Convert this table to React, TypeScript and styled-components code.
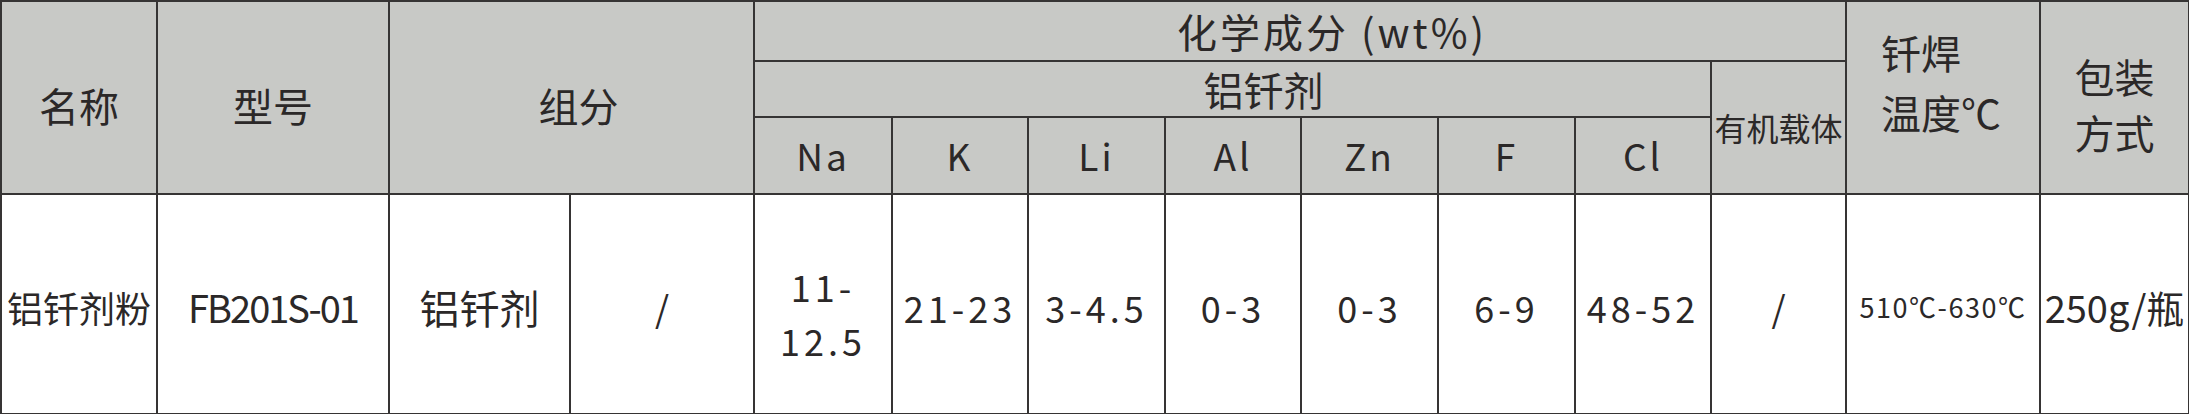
import styled, { createGlobalStyle } from "styled-components";

const GlobalStyle = createGlobalStyle`
  html, body {
    margin: 0;
    padding: 0;
    background: #ffffff;
  }
  body {
    font-family: "Noto Sans CJK SC", "Noto Sans", sans-serif;
    color: #2b2828;
  }
`;

const LINE = "#363434";
const HEAD_BG = "#c8c9c6";

const Table = styled.table`
  width: 2189px;
  height: 414px;
  border-collapse: collapse;
  table-layout: fixed;
  border: 2px solid ${LINE};
`;

const HeadRow = styled.tr<{ $h: number }>`
  height: ${(p) => p.$h}px;
`;

const BodyRow = styled.tr`
  height: 220px;
`;

const Th = styled.th<{ $size?: number; $spacing?: number; $padTop?: number; $padLeft?: number }>`
  background: ${HEAD_BG};
  border: 2px solid ${LINE};
  font-weight: 400;
  font-size: ${(p) => p.$size ?? 40}px;
  letter-spacing: ${(p) => p.$spacing ?? 0}px;
  line-height: 1.2;
  text-align: center;
  vertical-align: middle;
  padding: ${(p) => p.$padTop ?? 0}px 0 0 ${(p) => p.$padLeft ?? 0}px;
  white-space: nowrap;
  color: #2b2828;
`;

const StackHead = styled.th<{ $lh: number; $align: "left" | "center"; $padTop: number; $padLeft: number }>`
  background: ${HEAD_BG};
  border: 2px solid ${LINE};
  font-weight: 400;
  font-size: 40px;
  line-height: ${(p) => p.$lh}px;
  text-align: ${(p) => p.$align};
  vertical-align: ${(p) => (p.$align === "left" ? "top" : "middle")};
  padding: ${(p) => p.$padTop}px 0 0 ${(p) => p.$padLeft}px;
  color: #2b2828;
`;

const Td = styled.td<{ $size?: number; $spacing?: number; $lh?: number; $padTop?: number }>`
  border: 2px solid ${LINE};
  background: #ffffff;
  font-size: ${(p) => p.$size ?? 36}px;
  letter-spacing: ${(p) => p.$spacing ?? 0}px;
  line-height: ${(p) => p.$lh ?? 54}px;
  text-align: center;
  vertical-align: middle;
  padding: ${(p) => p.$padTop ?? 6}px 0 0 0;
  white-space: nowrap;
  color: #2b2828;
`;

const widths = [156, 232, 181, 184, 138, 136, 137, 136, 137, 137, 136, 135, 194, 149];

const elements = ["Na", "K", "Li", "Al", "Zn", "F", "Cl"];

const values = ["21-23", "3-4.5", "0-3", "0-3", "6-9", "48-52"];

export default function App() {
  return (
    <>
      <GlobalStyle />
      <Table>
        <colgroup>
          {widths.map((w, i) => (
            <col key={i} style={{ width: w }} />
          ))}
        </colgroup>
        <thead>
          <HeadRow $h={60}>
            <Th rowSpan={3} $padTop={14}>名称</Th>
            <Th rowSpan={3} $padTop={14}>型号</Th>
            <Th rowSpan={3} colSpan={2} $padTop={14} $padLeft={14}>组分</Th>
            <Th colSpan={8} $spacing={3} $padLeft={64}>化学成分 (wt%)</Th>
            <StackHead rowSpan={3} $lh={60} $align="left" $padTop={20} $padLeft={34}>
              钎焊
              <br />
              温度℃
            </StackHead>
            <StackHead rowSpan={3} $lh={56} $align="center" $padTop={12} $padLeft={0}>
              包装
              <br />
              方式
            </StackHead>
          </HeadRow>
          <HeadRow $h={56}>
            <Th colSpan={7} $padLeft={62}>铝钎剂</Th>
            <Th rowSpan={2} $size={32}>有机载体</Th>
          </HeadRow>
          <HeadRow $h={77}>
            {elements.map((el) => (
              <Th key={el} $size={37} $spacing={3}>
                {el}
              </Th>
            ))}
          </HeadRow>
        </thead>
        <tbody>
          <BodyRow>
            <Td $size={36}>铝钎剂粉</Td>
            <Td $size={38} $spacing={-2}>FB201S-01</Td>
            <Td $size={40}>铝钎剂</Td>
            <Td>/</Td>
            <Td $spacing={4} $padTop={18}>
              11-
              <br />
              12.5
            </Td>
            {values.map((v, i) => (
              <Td key={i} $spacing={4}>
                {v}
              </Td>
            ))}
            <Td>/</Td>
            <Td $size={27} $spacing={1.5}>510℃-630℃</Td>
            <Td $size={38}>250g/瓶</Td>
          </BodyRow>
        </tbody>
      </Table>
    </>
  );
}
